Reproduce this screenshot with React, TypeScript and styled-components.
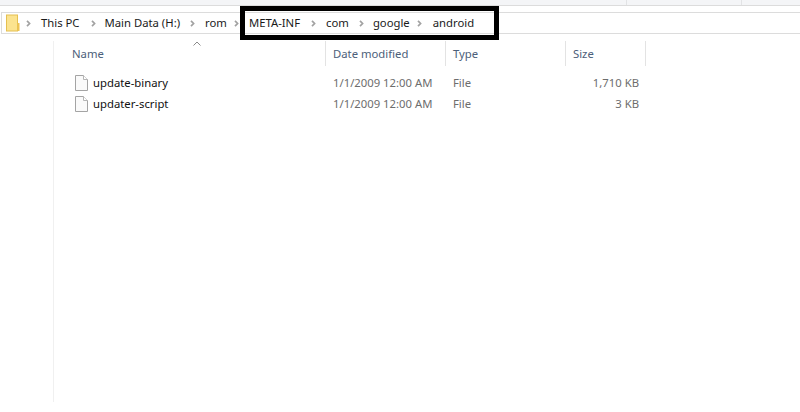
import React from "react";
import styled, { createGlobalStyle } from "styled-components";

const Global = createGlobalStyle`
  html, body { margin: 0; padding: 0; background: #fff; }
  #root { width: 800px; height: 412px; overflow: hidden; }
`;
const Page = styled.div`
  position: relative;
  width: 800px;
  height: 412px;
  background: #fff;
  font-family: "Noto Sans", "Open Sans", sans-serif;
  font-size: 11.3px;
  overflow: hidden;
`;
const TopStrip = styled.div`
  height: 5px;
  background: #f4f5f7;
  border-bottom: 1px solid #dcdcdc;
  display: flex;
`;
const StripCell = styled.div<{ $w: number }>`
  width: ${(p) => p.$w}px;
  border-right: 1px solid #e2e3e5;
  box-sizing: border-box;
`;
const AddressBar = styled.div`
  margin: 6px 0 0 1px;
  height: 20px;
  border: 1px solid #dcdcdc;
  border-right: none;
  display: flex;
  align-items: center;
  padding-left: 4px;
  color: #1a1a1a;
`;
const Crumb = styled.span<{ $left: number }>`
  margin-left: ${(p) => p.$left}px;
  white-space: nowrap;
  line-height: 20px;
`;
const Chevron = styled.svg<{ $left: number }>`
  margin-left: ${(p) => p.$left}px;
  flex: none;
`;
const Pane = styled.div`
  margin: 7px 0 0 53px;
  height: 361px;
  border-left: 1px solid #f0f0f0;
  position: relative;
`;
const HeaderRow = styled.div`
  display: grid;
  grid-template-columns: 272px 120px 120px 80px;
  height: 25px;
`;
const HeaderCell = styled.div<{ $pad: number; $sep?: boolean }>`
  padding-left: ${(p) => p.$pad}px;
  border-right: ${(p) => (p.$sep ? "1px solid #e3e3e3" : "none")};
  color: #4c607a;
  line-height: 25px;
  box-sizing: border-box;
`;
const SortCaret = styled.svg`
  position: absolute;
  left: 139px;
  top: 0;
`;
const FileList = styled.div`
  margin-top: 6px;
`;
const Row = styled.div`
  display: grid;
  grid-template-columns: 272px 120px 120px 73px;
  height: 21px;
  align-items: center;
`;
const NameCell = styled.div`
  display: flex;
  align-items: center;
  padding-left: 21px;
  gap: 5px;
  color: #111;
`;
const MetaCell = styled.div`
  padding-left: 7px;
  color: #6d6d6d;
`;
const SizeCell = styled.div`
  text-align: right;
  color: #6d6d6d;
`;
const Highlight = styled.div`
  position: absolute;
  left: 240px;
  top: 6px;
  width: 259px;
  height: 34px;
  border: 5px solid #000;
  box-sizing: border-box;
`;

const Sep = ({ left }: { left: number }) => (
  <Chevron $left={left} width="5" height="7" viewBox="0 0 5 7">
    <path d="M1 0.8 L3.6 3.5 L1 6.2" fill="none" stroke="#a2a2a2" strokeWidth="1.7" />
  </Chevron>
);

const Folder = () => (
  <svg width="14" height="18" viewBox="0 0 14 18" style={{ flex: "none" }}>
    <path d="M0.5 1 H6 L8 3 V1 H0.5 Z" fill="#e7c35f" />
    <rect x="0.5" y="1" width="11" height="16" fill="#fbe38f" stroke="#e5c050" />
    <rect x="11.5" y="9" width="2" height="8" fill="#eec454" />
  </svg>
);

const FileIcon = () => (
  <svg width="13" height="16" viewBox="0 0 13 16" style={{ flex: "none" }}>
    <path d="M0.5 0.5 H8.5 L12.5 4.5 V15.5 H0.5 Z" fill="#fafafa" stroke="#a4a4a4" />
    <path d="M8.5 0.5 V4.5 H12.5" fill="#fff" stroke="#b5b5b5" />
  </svg>
);

const files = [
  { name: "update-binary", size: "1,710 KB" },
  { name: "updater-script", size: "3 KB" },
];

export default function App() {
  return (
    <Page>
      <Global />
      <TopStrip>
        <StripCell $w={627} />
        <StripCell $w={115} />
      </TopStrip>
      <AddressBar>
        <Folder />
        <Sep left={6} />
        <Crumb $left={10}>This PC</Crumb>
        <Sep left={11} />
        <Crumb $left={9}>Main Data (H:)</Crumb>
        <Sep left={10} />
        <Crumb $left={10}>rom</Crumb>
        <Sep left={7} />
        <Crumb $left={10}>META-INF</Crumb>
        <Sep left={11} />
        <Crumb $left={10}>com</Crumb>
        <Sep left={10} />
        <Crumb $left={9}>google</Crumb>
        <Sep left={7} />
        <Crumb $left={11}>android</Crumb>
      </AddressBar>
      <Pane>
        <SortCaret width="8" height="6" viewBox="0 0 8 6">
          <path d="M0.5 4.5 L4 1 L7.5 4.5" fill="none" stroke="#8a8a8a" />
        </SortCaret>
        <HeaderRow>
          <HeaderCell $pad={18} $sep>Name</HeaderCell>
          <HeaderCell $pad={7} $sep>Date modified</HeaderCell>
          <HeaderCell $pad={7} $sep>Type</HeaderCell>
          <HeaderCell $pad={7} $sep>Size</HeaderCell>
        </HeaderRow>
        <FileList>
          {files.map((f) => (
            <Row key={f.name}>
              <NameCell>
                <FileIcon />
                {f.name}
              </NameCell>
              <MetaCell>1/1/2009 12:00 AM</MetaCell>
              <MetaCell>File</MetaCell>
              <SizeCell>{f.size}</SizeCell>
            </Row>
          ))}
        </FileList>
      </Pane>
      <Highlight />
    </Page>
  );
}
